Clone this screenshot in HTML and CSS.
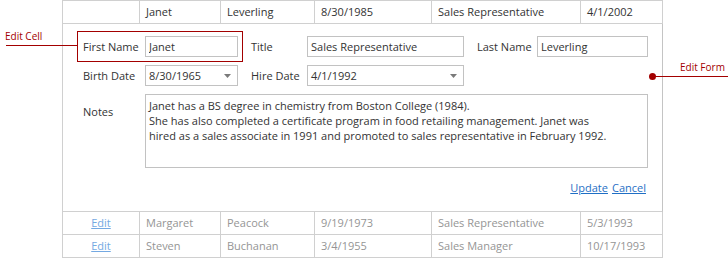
FILE: index.html
```html
<!DOCTYPE html>
<html lang="en">
<head>
    <meta charset="UTF-8">
    <title>Grid Edit Form</title>
    <link rel="stylesheet" href="styles.css">
</head>
<body>
    <div class="page">
        <div class="grid">
            <!-- row above the editor -->
            <div class="cell cmd"></div>
            <div class="cell">Janet</div>
            <div class="cell">Leverling</div>
            <div class="cell">8/30/1985</div>
            <div class="cell">Sales Representative</div>
            <div class="cell">4/1/2002</div>

            <!-- edit form row -->
            <div class="edit-form">
                <div class="form-line">
                    <div class="field field-hl">
                        <span class="caption cap-1">First Name</span>
                        <input class="editor w-1" type="text" value="Janet">
                    </div>
                    <div class="field">
                        <span class="caption cap-2">Title</span>
                        <input class="editor w-2" type="text" value="Sales Representative">
                    </div>
                    <div class="field">
                        <span class="caption cap-3">Last Name</span>
                        <input class="editor w-3" type="text" value="Leverling">
                    </div>
                </div>
                <div class="form-line">
                    <div class="field">
                        <span class="caption cap-1">Birth Date</span>
                        <div class="editor combo w-1">
                            <span>8/30/1965</span>
                            <svg width="7" height="4" viewBox="0 0 7 4"><path d="M0 0h7L3.5 4z" fill="#7a7a7a"/></svg>
                        </div>
                    </div>
                    <div class="field">
                        <span class="caption cap-2">Hire Date</span>
                        <div class="editor combo w-2">
                            <span>4/1/1992</span>
                            <svg width="7" height="4" viewBox="0 0 7 4"><path d="M0 0h7L3.5 4z" fill="#7a7a7a"/></svg>
                        </div>
                    </div>
                </div>
                <div class="form-line">
                    <div class="field">
                        <span class="caption cap-1 cap-top">Notes</span>
                        <textarea class="editor memo" wrap="off">Janet has a BS degree in chemistry from Boston College (1984).
She has also completed a certificate program in food retailing management. Janet was
hired as a sales associate in 1991 and promoted to sales representative in February 1992.</textarea>
                    </div>
                </div>
                <div class="actions">
                    <a href="#">Update</a>
                    <a href="#">Cancel</a>
                </div>
            </div>

            <!-- rows below, dimmed while editing -->
            <div class="cell cmd dim"><a href="#">Edit</a></div>
            <div class="cell dim">Margaret</div>
            <div class="cell dim">Peacock</div>
            <div class="cell dim">9/19/1973</div>
            <div class="cell dim">Sales Representative</div>
            <div class="cell dim">5/3/1993</div>

            <div class="cell cmd dim"><a href="#">Edit</a></div>
            <div class="cell dim">Steven</div>
            <div class="cell dim">Buchanan</div>
            <div class="cell dim">3/4/1955</div>
            <div class="cell dim">Sales Manager</div>
            <div class="cell dim">10/17/1993</div>
        </div>

        <!-- callouts -->
        <div class="callout callout-cell">Edit Cell</div>
        <div class="callout-line line-cell"></div>
        <div class="callout callout-form">Edit Form</div>
        <div class="callout-line line-form"></div>
        <div class="callout-dot"></div>
    </div>
</body>
</html>
```

FILE: styles.css
```css
body {
    margin: 0;
    padding: 0;
    background-color: #fff;
    font-family: "Open Sans", Arial, sans-serif;
    font-size: 11px;
    color: #333;
}

.page {
    position: relative;
    width: 728px;
    height: 258px;
    overflow: hidden;
}

.grid {
    display: grid;
    grid-template-columns: 77px 81px 94px 117px 149px 82px;
    width: 600px;
    margin-left: 62px;
    border-left: 1px solid #d0d0d0;
    border-top: 1px solid #d0d0d0;
}

.cell {
    box-sizing: border-box;
    height: 23px;
    line-height: 22px;
    padding: 0 6px;
    border-right: 1px solid #d0d0d0;
    border-bottom: 1px solid #d0d0d0;
    white-space: nowrap;
    overflow: hidden;
}

.cmd {
    text-align: center;
}

.dim {
    color: #959595;
}

.dim a {
    color: #74a9e2;
}

a {
    color: #1f6fc5;
    text-decoration: underline;
}

/* Edit form */
.edit-form {
    grid-column: 1 / -1;
    box-sizing: border-box;
    height: 188px;
    padding: 12px 16px 0 20px;
    border-right: 1px solid #c4c4c4;
    border-bottom: 1px solid #d0d0d0;
    display: flex;
    flex-direction: column;
    gap: 8px;
}

.form-line {
    display: flex;
}

.field {
    display: flex;
    align-items: center;
}

.field + .field {
    margin-left: 13px;
}

.field-hl {
    position: relative;
}

.field-hl::after {
    content: "";
    position: absolute;
    top: -5px;
    left: -6px;
    right: -5px;
    bottom: -5px;
    border: 1px solid #a30000;
}

.caption {
    white-space: nowrap;
}

.cap-1 { width: 62px; }
.cap-2 { width: 56px; }
.cap-3 { width: 60px; }

.cap-top {
    align-self: flex-start;
    padding-top: 10px;
}

.editor {
    box-sizing: border-box;
    height: 21px;
    margin: 0;
    padding: 0 3px;
    border: 1px solid #c2c2c2;
    font-family: inherit;
    font-size: 11px;
    color: #333;
    background: #fff;
    outline: none;
}

.w-1 { width: 93px; }
.w-2 { width: 157px; }
.w-3 { width: 111px; }

.combo {
    display: flex;
    align-items: center;
    justify-content: space-between;
    padding-right: 6px;
    line-height: 19px;
}

.memo {
    width: 503px;
    height: 74px;
    padding: 3px 3px;
    line-height: 15px;
    resize: none;
    overflow: hidden;
    white-space: pre;
}

.actions {
    display: flex;
    justify-content: flex-end;
    gap: 4px;
    margin-top: 4px;
    line-height: 16px;
}

/* Callouts */
.callout {
    position: absolute;
    font-size: 10px;
    line-height: 12px;
    color: #a30000;
    white-space: nowrap;
}

.callout-cell {
    left: 5px;
    top: 30px;
}

.callout-form {
    left: 680px;
    top: 61px;
}

.callout-line {
    position: absolute;
    height: 1px;
    background-color: #a30000;
}

.line-cell {
    left: 6px;
    top: 45px;
    width: 71px;
}

.line-form {
    left: 652px;
    top: 76px;
    width: 76px;
}

.callout-dot {
    position: absolute;
    left: 649px;
    top: 73px;
    width: 7px;
    height: 7px;
    border-radius: 50%;
    background-color: #a30000;
}
```
